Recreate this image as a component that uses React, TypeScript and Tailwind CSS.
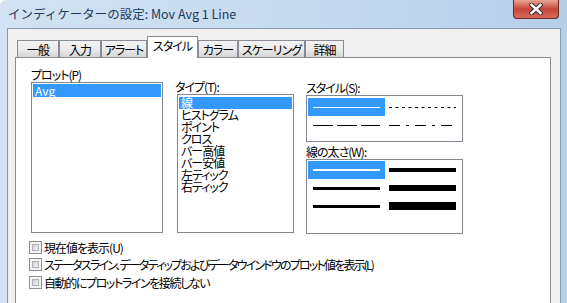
import React from 'react';

const ui = "font-['Noto_Sans_CJK_JP',sans-serif] [font-feature-settings:'palt'] text-[12px] leading-[14px] tracking-[-1px]";

const tabs = [
  { label: '一般', w: 'w-[42px]' },
  { label: '入力', w: 'w-[42px]' },
  { label: 'アラート', w: 'w-[46px]' },
  { label: 'スタイル', w: 'w-[51px]', active: true },
  { label: 'カラー', w: 'w-[40px]' },
  { label: 'スケーリング', w: 'w-[67px]' },
  { label: '詳細', w: 'w-[39px]' },
];

const types = ['線', 'ヒストグラム', 'ポイント', 'クロス', 'バー高値', 'バー安値', '左ティック', '右ティック'];

const checks = [
  { label: '現在値を表示(U)', mt: 'mt-0', tr: '' },
  { label: 'ステータスライン、データティップおよびデータウインドウのプロット値を表示(L)', mt: 'mt-[4px]', tr: 'tracking-[-1.8px]' },
  { label: '自動的にプロットラインを接続しない', mt: 'mt-[5px]', tr: 'tracking-[-1.4px]' },
];

function Dash({ pattern, white }: { pattern?: string; white?: boolean }) {
  return (
    <svg width="67" height="3" className="block">
      <line x1="0" y1="1.5" x2="67" y2="1.5" stroke={white ? '#fff' : '#000'} strokeWidth="1" strokeDasharray={pattern} />
    </svg>
  );
}

function Checkbox() {
  return (
    <div className="w-[13px] h-[13px] shrink-0 border border-[#8e8f8f] bg-[#f4f4f4] p-[2px]">
      <div className="w-full h-full border border-[#b0b4ba] bg-gradient-to-br from-[#cdd1d6] to-[#f3f4f5]" />
    </div>
  );
}

export default function App() {
  return (
    <div className={`w-[567px] h-[303px] overflow-hidden rounded-tl-[6px] bg-gradient-to-r from-[#d2e2f2] via-[#c6daef] to-[#b6cfe9] ${ui} text-black`}>
      {/* title bar */}
      <div className="relative h-[28px] flex items-center pl-[8px]">
        <span className="text-[12.5px] tracking-normal text-[#1e3a5f] [font-feature-settings:normal]">インディケーターの設定: Mov Avg 1 Line</span>
        <div className="absolute top-0 right-[8px] w-[46px] h-[19px] rounded-b-[4px] border border-t-0 border-[#6e2a24] bg-gradient-to-b from-[#e7a496] via-[#c8463a] to-[#d46a5c] flex items-center justify-center">
          <svg width="14" height="12" viewBox="0 0 14 12">
            <path d="M2.5 2 L11.5 10 M11.5 2 L2.5 10" stroke="#3b2a2a" strokeWidth="4.5" strokeLinecap="square" />
            <path d="M2.5 2 L11.5 10 M11.5 2 L2.5 10" stroke="#fff" strokeWidth="2.5" strokeLinecap="square" />
          </svg>
        </div>
      </div>

      {/* client area */}
      <div className="ml-[7px] w-[554px] h-[300px] border border-[#8a98aa] bg-[#f0f0f0]">
        <div className="flex items-end pl-[9px] pt-[7px]">
          {tabs.map((t) =>
            t.active ? (
              <div key={t.label} className={`${t.w} h-[22px] -mb-px relative z-10 bg-white border border-b-0 border-[#898c95] flex justify-center pt-[2px] whitespace-nowrap`}>
                {t.label}
              </div>
            ) : (
              <div key={t.label} className={`${t.w} h-[17px] border border-b-0 border-[#898c95] bg-gradient-to-b from-[#f3f3f3] via-[#ebebeb] to-[#d6d6d6] flex justify-center pt-[2px] whitespace-nowrap`}>
                {t.label}
              </div>
            )
          )}
        </div>

        {/* tab panel */}
        <div className="ml-[7px] w-[536px] h-[280px] border border-[#898c95] bg-white">
          <div className="flex pt-[10px]">
            <div className="ml-[15px] w-[132px]">
              <div className="h-[14px]">プロット(P)</div>
              <div className="h-[151px] border border-[#828790] p-px">
                <div className="h-[13px] bg-[#3399ff] text-white pl-[2px] leading-[13px] tracking-normal">Avg</div>
              </div>
            </div>

            <div className="ml-[12px] pt-[12px]">
              <div className="h-[14px]">タイプ(T):</div>
              <div className="ml-[2px] w-[117px] h-[139px] border border-[#828790] p-px">
                {types.map((t, i) => (
                  <div key={t} className={`h-[12px] leading-[12px] pl-[2px] ${i === 0 ? 'bg-[#3399ff] text-white mt-px' : ''}`}>
                    {t}
                  </div>
                ))}
              </div>
            </div>

            <div className="ml-[12px] w-[157px] pt-[13px]">
              <div className="h-[14px]">スタイル(S):</div>
              <div className="h-[47px] border border-[#828790] p-px">
                <div className="grid grid-cols-[77px_76px] grid-rows-[18px_18px] mt-px">
                  <div className="bg-[#3399ff] flex items-center pl-[5px]">
                    <Dash white />
                  </div>
                  <div className="flex items-center pl-[4px]">
                    <Dash pattern="3 3.5" />
                  </div>
                  <div className="flex items-center pl-[5px]">
                    <Dash pattern="20 4" />
                  </div>
                  <div className="flex items-center pl-[4px]">
                    <Dash pattern="11 6 3 6" />
                  </div>
                </div>
              </div>
              <div className="h-[14px] mt-[3px]">線の太さ(W):</div>
              <div className="h-[75px] border border-[#828790] p-px">
                <div className="grid grid-cols-[77px_76px] grid-rows-[18px_18px_18px]">
                  <div className="bg-[#3399ff] flex items-center pl-[5px]">
                    <div className="w-[67px] h-[2px] bg-white" />
                  </div>
                  <div className="flex items-center pl-[4px]">
                    <div className="w-[67px] h-[4px] bg-black" />
                  </div>
                  <div className="flex items-center pl-[5px]">
                    <div className="w-[67px] h-[3px] bg-black" />
                  </div>
                  <div className="flex items-center pl-[4px]">
                    <div className="w-[67px] h-[6px] bg-black" />
                  </div>
                  <div className="flex items-center pl-[5px]">
                    <div className="w-[67px] h-[3px] bg-black" />
                  </div>
                  <div className="flex items-center pl-[4px]">
                    <div className="w-[67px] h-[8px] bg-black" />
                  </div>
                </div>
              </div>
            </div>
          </div>

          <div className="ml-[13px] mt-[7px]">
            {checks.map((c) => (
              <div key={c.label} className={`flex items-center h-[13px] gap-[2px] ${c.mt}`}>
                <Checkbox />
                <span className={`whitespace-nowrap ${c.tr}`}>{c.label}</span>
              </div>
            ))}
          </div>
        </div>
      </div>
    </div>
  );
}
